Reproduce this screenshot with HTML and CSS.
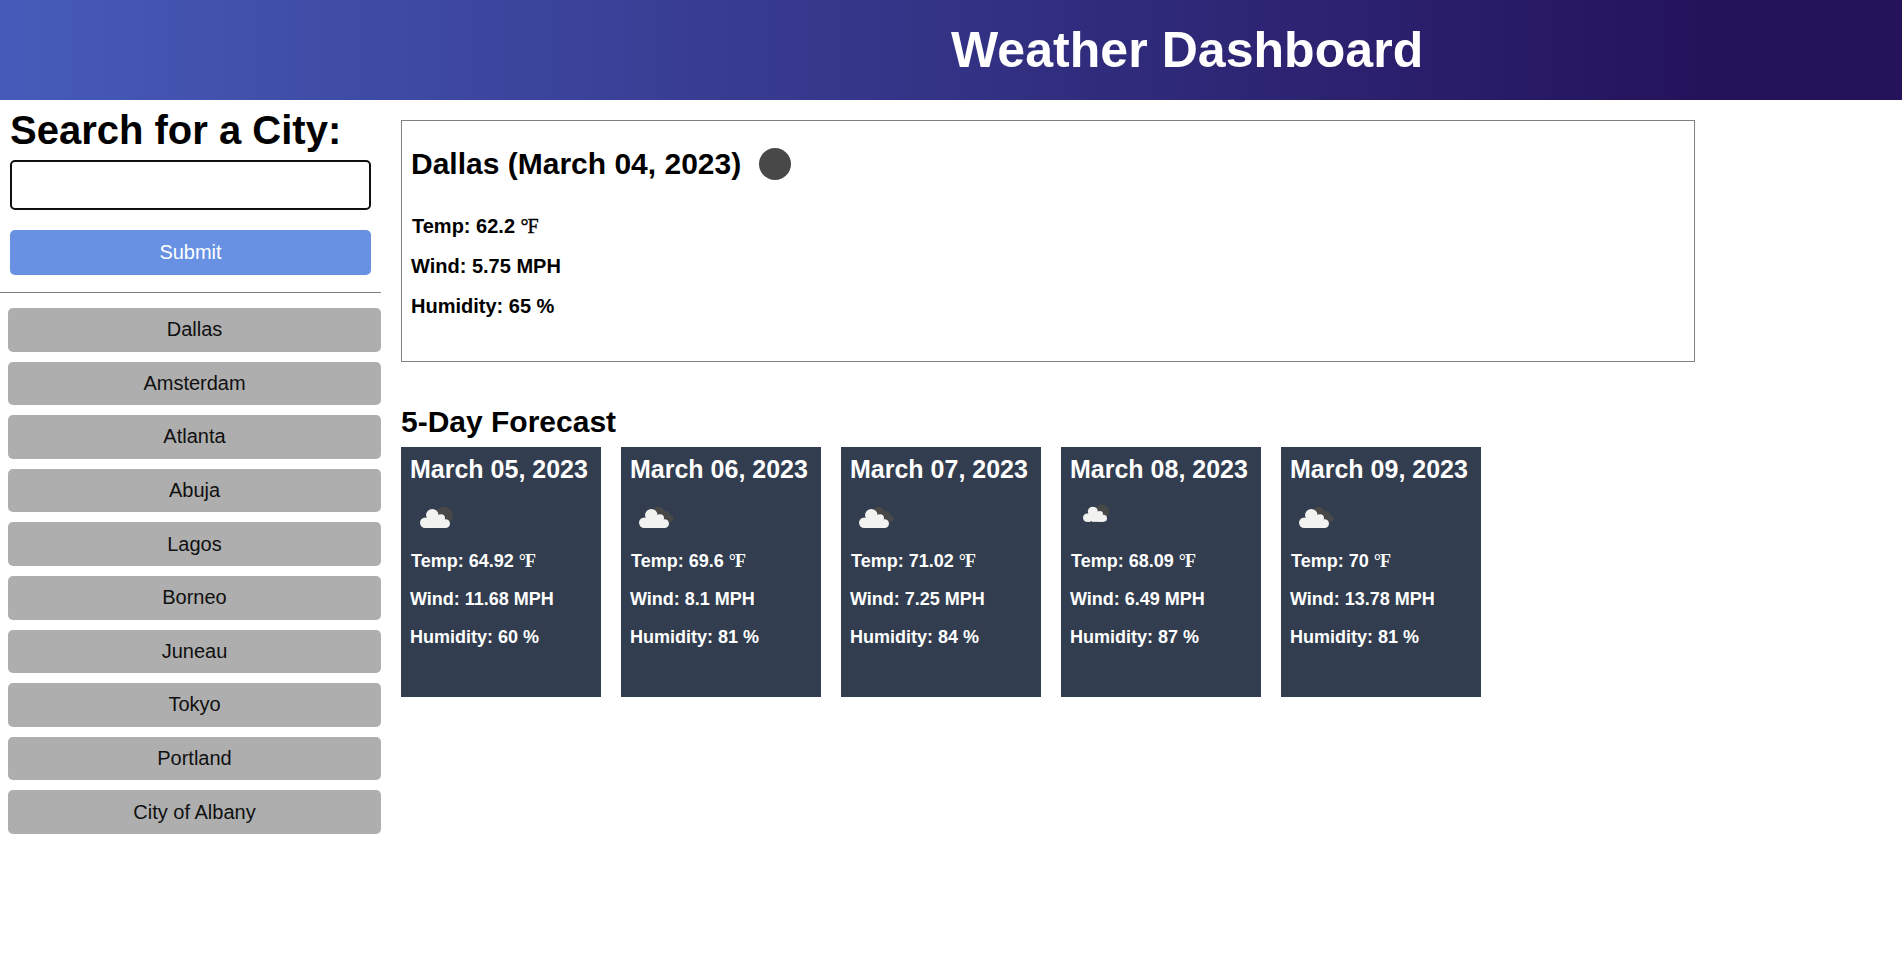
FILE: index.html
```html
<!DOCTYPE html>
<html lang="en">
<head>
<meta charset="utf-8">
<title>Weather Dashboard</title>
<link rel="stylesheet" href="styles.css">
</head>
<body>
<svg class="defs" aria-hidden="true">
  <symbol id="cloud" viewBox="0 0 30 19"><circle cx="5.200" cy="13.800" r="5.200"/><circle cx="12.300" cy="6.200" r="6.200"/><circle cx="21" cy="9.300" r="4"/><circle cx="25.600" cy="14.600" r="4.400"/><rect x="5.200" y="9" width="18" height="10"/><rect x="20" y="12" width="5.600" height="7"/></symbol>
  <symbol id="cloud-back" viewBox="0 0 50 50"><circle cx="28.500" cy="18.700" r="5.200"/><circle cx="36" cy="22.300" r="4"/><circle cx="40" cy="25.600" r="3.600"/><path d="M28 18h7l4 11H28z"/></symbol>
</svg>
<header class="banner"><h1 class="banner-title">Weather Dashboard</h1></header>
<main class="layout">
  <aside class="sidebar">
    <form class="search">
      <h2 class="search-title">Search for a City:</h2>
      <input class="search-input" type="text" aria-label="City">
      <button class="search-button" type="button">Submit</button>
    </form>
    <div class="history">
      <button class="city">Dallas</button>
      <button class="city">Amsterdam</button>
      <button class="city">Atlanta</button>
      <button class="city">Abuja</button>
      <button class="city">Lagos</button>
      <button class="city">Borneo</button>
      <button class="city">Juneau</button>
      <button class="city">Tokyo</button>
      <button class="city">Portland</button>
      <button class="city">City of Albany</button>
    </div>
  </aside>
  <section class="content">
    <div class="current">
      <h2 class="current-title"><span class="place">Dallas (March 04, 2023)</span><svg class="moon" viewBox="0 0 32 32"><circle cx="16" cy="16" r="16"/></svg></h2>
      <p class="reading temp">Temp: 62.2 <span class="unit">°F</span></p>
      <p class="reading">Wind: 5.75 MPH</p>
      <p class="reading">Humidity: 65 %</p>
    </div>
    <h2 class="forecast-title">5-Day Forecast</h2>
    <div class="forecast">
      <article class="card">
        <h3 class="date">March 05, 2023</h3>
        <svg class="icon" viewBox="0 0 50 50"><circle class="dark" cx="34" cy="22.300" r="8.700"/><use class="light" href="#cloud" x="10" y="16" width="30" height="19"/></svg>
        <p class="stat temp">Temp: 64.92 <span class="unit">°F</span></p><p class="stat">Wind: 11.68 MPH</p><p class="stat">Humidity: 60 %</p>
      </article>
      <article class="card">
        <h3 class="date">March 06, 2023</h3>
        <svg class="icon" viewBox="0 0 50 50"><use class="dark" href="#cloud-back" width="50" height="50"/><use class="light" href="#cloud" x="9" y="16" width="30" height="19"/></svg>
        <p class="stat temp">Temp: 69.6 <span class="unit">°F</span></p><p class="stat">Wind: 8.1 MPH</p><p class="stat">Humidity: 81 %</p>
      </article>
      <article class="card">
        <h3 class="date">March 07, 2023</h3>
        <svg class="icon" viewBox="0 0 50 50"><use class="dark" href="#cloud-back" width="50" height="50"/><use class="light" href="#cloud" x="9" y="16" width="30" height="19"/></svg>
        <p class="stat temp">Temp: 71.02 <span class="unit">°F</span></p><p class="stat">Wind: 7.25 MPH</p><p class="stat">Humidity: 84 %</p>
      </article>
      <article class="card">
        <h3 class="date">March 08, 2023</h3>
        <svg class="icon" viewBox="0 0 50 50"><circle class="dark" cx="31.800" cy="18.800" r="7.300"/><use class="light" href="#cloud" x="13" y="13.500" width="24" height="15.500"/><path class="rain" d="M21.500 28l-.6 1.500M24.800 31.500l-.6 1.500M28.800 30.500l-.6 1.500M20 32.500l-.6 1.500M23.500 34.500l-.6 1.500M27 34l-.6 1.500"/></svg>
        <p class="stat temp">Temp: 68.09 <span class="unit">°F</span></p><p class="stat">Wind: 6.49 MPH</p><p class="stat">Humidity: 87 %</p>
      </article>
      <article class="card">
        <h3 class="date">March 09, 2023</h3>
        <svg class="icon" viewBox="0 0 50 50"><use class="dark" href="#cloud-back" width="50" height="50"/><use class="light" href="#cloud" x="9" y="16" width="30" height="19"/></svg>
        <p class="stat temp">Temp: 70 <span class="unit">°F</span></p><p class="stat">Wind: 13.78 MPH</p><p class="stat">Humidity: 81 %</p>
      </article>
    </div>
  </section>
</main>
</body>
</html>
```
FILE: styles.css
```css
* { box-sizing: border-box; }
body { margin: 0; background: #fff; color: #000; font-family: "Liberation Sans", Arial, sans-serif; }
h1, h2, h3, p { margin: 0; }
.defs { display: none; }
.banner { height: 100px; padding-left: 951px; background: linear-gradient(90deg, #465bb9, #24125b 90%); }
.banner-title { color: #fff; font-size: 50px; line-height: 100px; letter-spacing: .05px; white-space: nowrap; }
.layout { display: flex; }
.sidebar { width: 381px; flex: none; }
.search { display: flex; flex-direction: column; padding: 7px 10px 17px; height: 193px; border-bottom: 1px solid #808080; }
.search-title { font-size: 40px; line-height: 46px; margin-bottom: 7px; white-space: nowrap; }
.search-input { width: 361px; height: 50px; border: 2px solid #101010; border-radius: 5px; }
.search-button { width: 361px; height: 45px; margin-top: 20px; border: 0; border-radius: 5px; background: #6890e3; color: #fff; font: 20px "Liberation Sans", Arial, sans-serif; }
.history { display: flex; flex-direction: column; gap: 10px; padding: 15px 0 0 8px; }
.city { height: 43.600px; border: 0; padding: 0; border-radius: 5px; background: #aeaeae; color: #101010; font: 20px "Liberation Sans", Arial, sans-serif; }
.content { flex: 1; padding: 20px 207px 0 20px; }
.current { height: 242px; border: 1px solid #808080; padding: 26px 9px 0; }
.current-title { display: flex; align-items: center; gap: 18px; height: 34px; font-size: 30px; margin-bottom: 25px; }
.moon { width: 32px; height: 32px; fill: #484849; }
.reading { font-size: 20px; font-weight: bold; line-height: 40px; height: 40px; }
.temp { padding-left: 1px; }
.unit { font-family: "Liberation Serif", "Times New Roman", serif; letter-spacing: -1px; }
.reading .unit { font-weight: normal; -webkit-text-stroke: .4px #000; }
.forecast-title { font-size: 30px; line-height: 34px; margin: 43px 0 8px; }
.forecast { display: flex; gap: 20px; }
.card { width: 200px; height: 250px; padding: 8px 9px; background: #323d4f; color: #fff; }
.date { font-size: 25px; line-height: 28px; white-space: nowrap; }
.icon { display: block; width: 50px; height: 50px; margin: 10px 0 -1px; }
.dark { fill: #484849; }
.light { fill: #f2f2f1; }
.rain { stroke: #484849; stroke-width: 1.200px; fill: none; }
.stat { font-size: 18px; font-weight: bold; line-height: 38px; height: 38px; }
```
